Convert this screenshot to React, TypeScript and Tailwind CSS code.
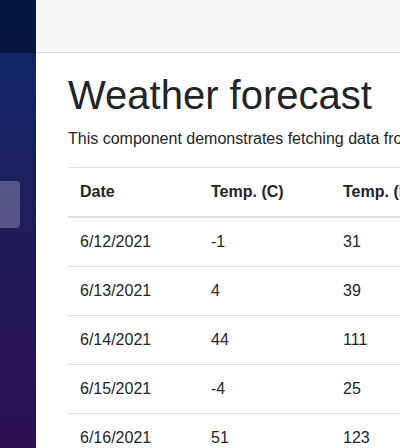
import React from 'react'

const forecasts = [
  { date: '6/12/2021', c: -1, f: 31, summary: 'Freezing' },
  { date: '6/13/2021', c: 4, f: 39, summary: 'Bracing' },
  { date: '6/14/2021', c: 44, f: 111, summary: 'Scorching' },
  { date: '6/15/2021', c: -4, f: 25, summary: 'Chilly' },
  { date: '6/16/2021', c: 51, f: 123, summary: 'Sweltering' },
]

export default function App() {
  return (
    <div className="flex w-[400px] h-[448px] overflow-hidden bg-white text-[#212529] font-['Liberation_Sans',Arial,sans-serif]">
      <div className="w-[36px] shrink-0 flex flex-col bg-gradient-to-b from-[#052767] to-[#2a1051]">
        <div className="h-[53px] shrink-0 bg-black/40" />
        <div className="mt-[128px] w-[20px] h-[47px] rounded-r-[4px] bg-white/25" />
      </div>

      <div className="w-[800px] shrink-0 flex flex-col">
        <div className="h-[53px] shrink-0 bg-[#f7f7f7] border-b border-[#d6d5d5]" />
        <div className="pl-8 pr-6 pt-[17.6px]">
          <h1 className="text-[40px] leading-[1.2] font-medium mb-2">Weather forecast</h1>
          <p className="text-base leading-6 mb-4">This component demonstrates fetching data from the server.</p>
          <table className="w-full border-collapse text-left text-base leading-6">
            <thead>
              <tr>
                <th className="w-[131px] p-3 font-bold align-bottom border-t border-b-2 border-[#dee2e6]">Date</th>
                <th className="w-[132px] p-3 font-bold align-bottom border-t border-b-2 border-[#dee2e6]">Temp. (C)</th>
                <th className="w-[132px] p-3 font-bold align-bottom border-t border-b-2 border-[#dee2e6]">Temp. (F)</th>
                <th className="p-3 font-bold align-bottom border-t border-b-2 border-[#dee2e6]">Summary</th>
              </tr>
            </thead>
            <tbody>
              {forecasts.map(f => (
                <tr key={f.date}>
                  <td className="p-3 border-t border-[#dee2e6]">{f.date}</td>
                  <td className="p-3 border-t border-[#dee2e6]">{f.c}</td>
                  <td className="p-3 border-t border-[#dee2e6]">{f.f}</td>
                  <td className="p-3 border-t border-[#dee2e6]">{f.summary}</td>
                </tr>
              ))}
            </tbody>
          </table>
        </div>
      </div>
    </div>
  )
}
